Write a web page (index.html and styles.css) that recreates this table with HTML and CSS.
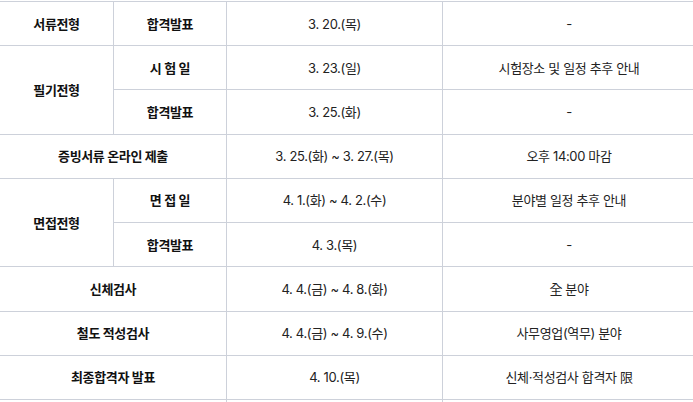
FILE: index.html
```html
<!DOCTYPE html>
<html lang="ko">
<head>
<meta charset="utf-8">
<link rel="stylesheet" href="styles.css">
</head>
<body>
<table class="schedule">
  <colgroup>
    <col class="c1"><col class="c2"><col class="c3"><col class="c4">
  </colgroup>
  <tbody>
    <tr>
      <th>서류전형</th>
      <th>합격발표</th>
      <td>3. 20.(목)</td>
      <td>-</td>
    </tr>
    <tr>
      <th rowspan="2">필기전형</th>
      <th>시 험 일</th>
      <td>3. 23.(일)</td>
      <td>시험장소 및 일정 추후 안내</td>
    </tr>
    <tr>
      <th>합격발표</th>
      <td>3. 25.(화)</td>
      <td>-</td>
    </tr>
    <tr>
      <th colspan="2">증빙서류 온라인 제출</th>
      <td>3. 25.(화) ~ 3. 27.(목)</td>
      <td>오후 14:00 마감</td>
    </tr>
    <tr>
      <th rowspan="2">면접전형</th>
      <th>면 접 일</th>
      <td>4. 1.(화) ~ 4. 2.(수)</td>
      <td>분야별 일정 추후 안내</td>
    </tr>
    <tr>
      <th>합격발표</th>
      <td>4. 3.(목)</td>
      <td>-</td>
    </tr>
    <tr>
      <th colspan="2">신체검사</th>
      <td>4. 4.(금) ~ 4. 8.(화)</td>
      <td>全 분야</td>
    </tr>
    <tr>
      <th colspan="2">철도 적성검사</th>
      <td>4. 4.(금) ~ 4. 9.(수)</td>
      <td>사무영업(역무) 분야</td>
    </tr>
    <tr>
      <th colspan="2">최종합격자 발표</th>
      <td>4. 10.(목)</td>
      <td>신체·적성검사 합격자 限</td>
    </tr>
    <tr>
      <th colspan="2">&nbsp;</th>
      <td>&nbsp;</td>
      <td>&nbsp;</td>
    </tr>
  </tbody>
</table>
</body>
</html>
```

FILE: styles.css
```css
html, body {
  margin: 0;
  padding: 0;
  background: #ffffff;
}

body {
  padding-top: 1px;
  overflow: hidden;
  font-family: Inter, "Noto Sans CJK KR", sans-serif;
  font-size: 13px;
  color: #222222;
}

.schedule {
  border-collapse: collapse;
  table-layout: fixed;
  width: 696px;
  margin-left: -1px;
}

.c1 { width: 114px; }
.c2 { width: 113px; }
.c3 { width: 216px; }
.c4 { width: 253px; }

.schedule tr {
  height: 44.22px;
}

.schedule th,
.schedule td {
  border: 1px solid #cdd1da;
  padding: 0 4px;
  text-align: center;
  vertical-align: middle;
  letter-spacing: -0.35px;
  line-height: 18px;
}

.schedule th {
  font-weight: 700;
  color: #111111;
}

.schedule td {
  font-weight: 400;
  color: #222222;
}
```
